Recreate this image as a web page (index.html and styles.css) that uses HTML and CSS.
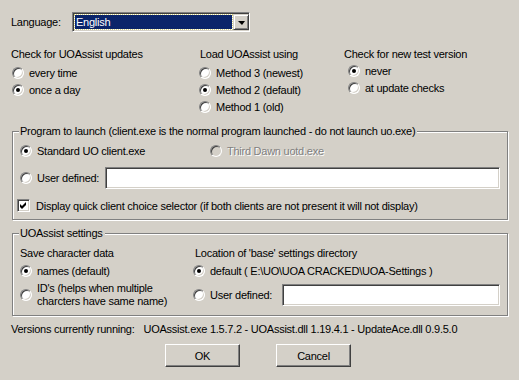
FILE: index.html
```html
<!DOCTYPE html>
<html>
<head>
    <title>UOAssist Options</title>
    <link rel="stylesheet" href="styles.css">
</head>
<body>
<div class="dialog">
    <div class="language-row">
        <span class="language-label">Language:</span>
        <div class="combo">
            <span class="combo-value">English</span>
            <span class="combo-button"><span class="arrow"></span></span>
        </div>
    </div>

    <div class="top-options">
        <div class="option-col col-updates">
            <div class="caption">Check for UOAssist updates</div>
            <div class="option"><span class="radio"></span>every time</div>
            <div class="option"><span class="radio checked"></span>once a day</div>
        </div>
        <div class="option-col col-method">
            <div class="caption">Load UOAssist using</div>
            <div class="option"><span class="radio"></span>Method 3 (newest)</div>
            <div class="option"><span class="radio checked"></span>Method 2 (default)</div>
            <div class="option"><span class="radio"></span>Method 1 (old)</div>
        </div>
        <div class="option-col col-test">
            <div class="caption">Check for new test version</div>
            <div class="option"><span class="radio checked"></span>never</div>
            <div class="option"><span class="radio"></span>at update checks</div>
        </div>
    </div>

    <fieldset class="group group-launch">
        <legend>Program to launch (client.exe is the normal program launched - do not launch uo.exe)</legend>
        <div class="launch-row">
            <div class="option client-standard"><span class="radio checked"></span>Standard UO client.exe</div>
            <div class="option disabled"><span class="radio"></span>Third Dawn uotd.exe</div>
        </div>
        <div class="launch-row user-row">
            <div class="option user-label"><span class="radio"></span>User defined:</div>
            <div class="textbox launch-path"></div>
        </div>
        <div class="launch-row check-row">
            <span class="checkbox">
                <svg width="9" height="9" viewBox="0 0 9 9"><path d="M1 3L3 5L7 1V4L3 8L1 6Z" fill="#000"/></svg>
            </span>
            Display quick client choice selector (if both clients are not present it will not display)
        </div>
    </fieldset>

    <fieldset class="group group-settings">
        <legend>UOAssist settings</legend>
        <div class="settings-cols">
            <div class="settings-col col-save">
                <div class="caption">Save character data</div>
                <div class="option"><span class="radio checked"></span>names (default)</div>
                <div class="option two-line"><span class="radio"></span><span>ID's (helps when multiple<br>charcters have same name)</span></div>
            </div>
            <div class="settings-col col-location">
                <div class="caption">Location of 'base' settings directory</div>
                <div class="option"><span class="radio checked"></span>default ( E:\UO\UOA CRACKED\UOA-Settings )</div>
                <div class="option location-user">
                    <span class="radio"></span><span class="user-text">User defined:</span>
                    <div class="textbox settings-path"></div>
                </div>
            </div>
        </div>
    </fieldset>

    <div class="versions">Versions currently running:<span class="versions-list">UOAssist.exe 1.5.7.2 - UOAssist.dll 1.19.4.1 - UpdateAce.dll 0.9.5.0</span></div>

    <div class="buttons">
        <button class="push-button">OK</button>
        <button class="push-button">Cancel</button>
    </div>
</div>
</body>
</html>
```

FILE: styles.css
```css
body {
    margin: 0;
    background-color: #d4d0c8;
    font-family: "Liberation Sans", Arial, sans-serif;
    font-size: 11px;
    letter-spacing: -0.25px;
    color: #000;
}

.dialog {
    width: 519px;
    height: 380px;
    box-sizing: border-box;
    padding: 12px 0 0 12px;
}

/* language combo */
.language-row {
    display: flex;
    align-items: center;
    height: 20px;
}

.language-label {
    width: 61px;
    margin-left: -1px;
}

.combo {
    width: 178px;
    height: 20px;
    box-sizing: border-box;
    display: flex;
    padding: 1px 0 0 1px;
    background-color: #fff;
    border: 1px solid;
    border-color: #808080 #fff #fff #808080;
    box-shadow: inset 1px 1px #404040, inset -1px -1px #d4d0c8;
}

.combo-value {
    flex: 1;
    margin: 1px 1px 2px 1px;
    padding-left: 1px;
    line-height: 14px;
    background-color: #0a246a;
    color: #fff;
    outline: 1px dotted #d4d080;
}

.combo-button {
    width: 16px;
    height: 16px;
    box-sizing: border-box;
    display: flex;
    align-items: center;
    justify-content: center;
    background-color: #d4d0c8;
    border: 1px solid;
    border-color: #d4d0c8 #404040 #404040 #d4d0c8;
    box-shadow: inset 1px 1px #fff, inset -1px -1px #808080;
}

.arrow {
    width: 0;
    height: 0;
    border-left: 4px solid transparent;
    border-right: 3px solid transparent;
    border-top: 4px solid #000;
    margin-top: 1px;
}

/* radio options */
.top-options {
    display: flex;
    margin-top: 16px;
}

.caption {
    line-height: 13px;
}

.option {
    display: flex;
    align-items: center;
    height: 17px;
}

.radio {
    flex: none;
    position: relative;
    width: 12px;
    height: 12px;
    box-sizing: border-box;
    margin-right: 5px;
    border-radius: 50%;
    background-color: #fff;
    border: 1px solid;
    border-color: #808080 #fff #fff #808080;
    box-shadow: inset 1px 1px #404040, inset -1px -1px #d4d0c8;
}

.radio.checked::after {
    content: "";
    position: absolute;
    left: 3px;
    top: 3px;
    width: 4px;
    height: 4px;
    border-radius: 50%;
    background-color: #000;
}

.col-updates {
    width: 188px;
}

.col-updates .caption {
    margin-left: -1px;
}

.col-method {
    width: 145px;
    margin-left: -1px;
}

.col-method .caption {
    margin-left: 1px;
}

.option-col .caption + .option {
    margin-top: 3px;
}

.col-test .option {
    padding-left: 4px;
}

.col-test .caption + .option {
    margin-top: 1px;
}

/* group boxes */
.group {
    width: 496px;
    box-sizing: border-box;
    margin: 10px 0 0 0;
    padding: 0 0 0 7px;
    border: 1px solid #808080;
    box-shadow: 1px 1px 0 #fff, inset 1px 1px 0 #fff;
}

.group legend {
    margin-left: -1px;
    padding: 0 2px 0 1px;
    line-height: 13px;
    background-color: #d4d0c8;
}

.launch-row {
    display: flex;
    align-items: center;
}

.group-launch .launch-row:first-of-type {
    margin-top: 4px;
}

.client-standard {
    width: 190px;
}

.disabled {
    color: #808080;
    text-shadow: 1px 1px 0 #fff;
}

.disabled .radio {
    background-color: #d4d0c8;
}

.user-row {
    margin-top: 8px;
}

.user-label {
    width: 85px;
}

.textbox {
    height: 22px;
    box-sizing: border-box;
    background-color: #fff;
    border: 1px solid;
    border-color: #808080 #fff #fff #808080;
    box-shadow: inset 1px 1px #404040, inset -1px -1px #d4d0c8;
}

.launch-path {
    width: 395px;
}

.check-row {
    height: 17px;
    margin: 8px 0 5px -3px;
}

.checkbox {
    flex: none;
    width: 13px;
    height: 13px;
    box-sizing: border-box;
    margin-right: 6px;
    padding: 1px;
    background-color: #fff;
    border: 1px solid;
    border-color: #808080 #fff #fff #808080;
    box-shadow: inset 1px 1px #404040, inset -1px -1px #d4d0c8;
}

.checkbox svg {
    display: block;
}

.group-settings {
    margin-top: 7px;
}

.settings-cols {
    display: flex;
    padding-top: 7px;
    padding-bottom: 6px;
}

.col-save {
    width: 173px;
}

.settings-col .caption + .option {
    margin-top: 2px;
}

.two-line {
    height: 28px;
    margin-top: 2px;
    line-height: 13px;
}

.col-location .caption {
    margin-left: 2px;
}

.location-user {
    height: 28px;
    margin-top: 2px;
}

.user-text {
    width: 72px;
}

.settings-path {
    width: 218px;
}

/* footer */
.versions {
    line-height: 13px;
    margin: 7px 0 0 -1px;
}

.versions-list {
    margin-left: 9px;
}

.buttons {
    display: flex;
    gap: 36px;
    margin: 8px 0 0 153px;
}

.push-button {
    width: 75px;
    height: 23px;
    font-family: "Liberation Sans", Arial, sans-serif;
    font-size: 11px;
    letter-spacing: -0.25px;
    color: #000;
    background-color: #d4d0c8;
    border: 1px solid;
    border-color: #fff #404040 #404040 #fff;
    box-shadow: inset -1px -1px #808080;
    padding: 0;
}
```
